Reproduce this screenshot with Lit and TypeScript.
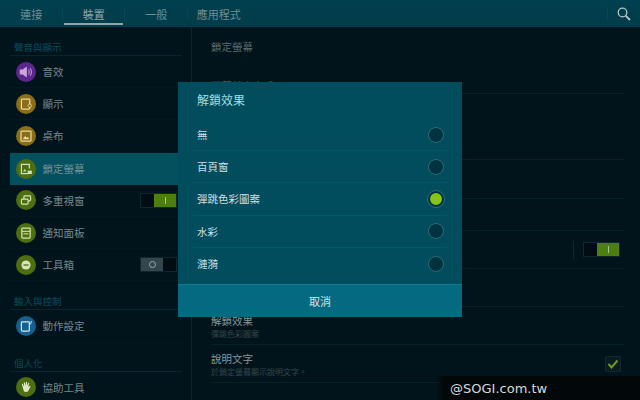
import { LitElement, html, css, svg } from 'lit';
import { customElement } from 'lit/decorators.js';

const icons: Record<string, unknown> = {
  sound: svg`<path d="M4.500 9h3.500l5-3.500v13l-5-3.500H4.500z" fill="#c9a8dc"/><path d="M15 9c1 1.500 1 4.500 0 6M17 7.500c2 2.500 2 6.500 0 9" fill="none" stroke="#c9a8dc" stroke-width="1.200"/>`,
  display: svg`<rect x="6.500" y="6" width="10" height="12" rx="1" fill="none" stroke="#e5d9a8" stroke-width="1.500"/><circle cx="16.500" cy="14" r="2" fill="#8a6d14" stroke="#e5d9a8"/>`,
  wall: svg`<rect x="6" y="6" width="12" height="12" rx="1" fill="none" stroke="#e5d9a8" stroke-width="1.500"/><path d="M8 16l3-4 2 2 1-1 2 3z" fill="#e5d9a8"/>`,
  lock: svg`<path d="M15 17.500H6.500V6.500H16v5" fill="none" stroke="#cfe0c0" stroke-width="1.500"/><path d="M8.500 15l2-3 2 3z" fill="#cfe0c0"/><rect x="14" y="14" width="5" height="4" fill="#cfe0c0"/>`,
  multi: svg`<rect x="9.500" y="7" width="8" height="6" rx="1" fill="none" stroke="#d5e4b8" stroke-width="1.400"/><rect x="6.500" y="11" width="8" height="6" rx="1" fill="#4d6f10" stroke="#d5e4b8" stroke-width="1.400"/>`,
  panel: svg`<rect x="7" y="6" width="10" height="12" rx="1" fill="none" stroke="#d5e4b8" stroke-width="1.500"/><path d="M7 10h10M9 13h6" stroke="#d5e4b8" stroke-width="1.200"/>`,
  tools: svg`<circle cx="12" cy="12" r="5.500" fill="#d5e4b8"/><path d="M9 12h6" stroke="#4d6f10" stroke-width="1.600"/>`,
  motion: svg`<rect x="6.500" y="7" width="9.500" height="11" rx="1" fill="none" stroke="#cfe4f2" stroke-width="1.500"/><path d="M18.500 6l-1 4" stroke="#cfe4f2" stroke-width="1.200"/>`,
  hand: svg`<path d="M8 12l-1-3.500 1-.5 1.500 3L9.500 6.500h1.200L11.500 10.500 12 6h1.200l.2 4.500L14.800 7l1 .4-1 4.600 2-1.500.7.800L14.500 17c-1 1.200-4 1.200-5 0z" fill="#dfe9c8"/>`,
};

const sections = [
  {
    title: '聲音與顯示',
    items: [
      { label: '音效', icon: 'sound', color: '#5d2590' },
      { label: '顯示', icon: 'display', color: '#8a6d14' },
      { label: '桌布', icon: 'wall', color: '#8a6d14' },
      { label: '鎖定螢幕', icon: 'lock', color: '#4d6f10', active: true },
      { label: '多重視窗', icon: 'multi', color: '#4d6f10', toggle: 'on' },
      { label: '通知面板', icon: 'panel', color: '#4d6f10' },
      { label: '工具箱', icon: 'tools', color: '#4d6f10', toggle: 'off' },
    ],
  },
  { title: '輸入與控制', items: [{ label: '動作設定', icon: 'motion', color: '#15608f' }] },
  { title: '個人化', items: [{ label: '協助工具', icon: 'hand', color: '#4d6f10' }] },
];

const tabs = ['連接', '裝置', '一般', '應用程式'];
const options = ['無', '百頁窗', '彈跳色彩圖案', '水彩', '漣漪'];

@customElement('app-root')
export class AppRoot extends LitElement {
  static styles = css`
    :host {
      display: block;
      width: 640px;
      height: 400px;
      position: relative;
      overflow: hidden;
      background: #01141c;
      font-family: 'Noto Sans CJK TC', 'Liberation Sans', sans-serif;
    }
    .tabs {
      display: flex;
      height: 27px;
      background: linear-gradient(#01404f, #013c4a);
      color: #6f8c93;
      font-size: 11px;
    }
    .tab {
      width: 62.500px;
      display: flex;
      align-items: center;
      justify-content: center;
      position: relative;
    }
    .tab:not(:nth-child(4))::before {
      content: '';
      position: absolute;
      right: 0;
      top: 8px;
      height: 12px;
      width: 1px;
      background: #02495a;
    }
    .tab.on {
      color: #8ea5aa;
    }
    .tab.on::after {
      content: '';
      position: absolute;
      left: 1px;
      right: 2px;
      bottom: 2px;
      height: 2px;
      background: #8fa5a8;
    }
    .tabs .spacer {
      flex: 1;
    }
    .search {
      width: 32px;
      display: flex;
      align-items: center;
      justify-content: center;
      border-left: 1px solid #024a5a;
      margin: 7px 0;
    }
    .main {
      display: flex;
      height: 373px;
    }
    .side {
      width: 192px;
      flex: none;
      border-right: 1px solid #0b2630;
      padding: 12px 9px 0 10px;
      box-sizing: border-box;
    }
    .sec {
      height: 17px;
      padding-left: 4px;
      color: #0a4b59;
      font-size: 9.500px;
      line-height: 16px;
      border-bottom: 1px solid #06252e;
      box-sizing: border-box;
    }
    .group {
      margin-bottom: 12px;
    }
    .row {
      height: 32.200px;
      display: flex;
      align-items: center;
      padding: 0 5px 0 6px;
      gap: 6.500px;
      color: #78878b;
      font-size: 10.500px;
      border-bottom: 1px solid #04191f;
      box-sizing: border-box;
    }
    .row.active {
      background: #04505f;
      margin-right: -9px;
      color: #74939a;
      border-bottom: none;
    }
    .ic {
      width: 20px;
      height: 20px;
      border-radius: 50%;
      display: block;
      flex: none;
    }
    .ic svg {
      display: block;
      width: 20px;
      height: 20px;
    }
    .label {
      flex: 1;
    }
    .sw {
      display: flex;
      width: 37px;
      height: 15px;
      border: 1px solid #0e2730;
      box-sizing: border-box;
      background: #020d13;
    }
    .sw i {
      display: flex;
      width: 22px;
      align-items: center;
      justify-content: center;
      background: #4d7f10;
      margin-left: auto;
    }
    .sw i::before {
      content: '';
      width: 1px;
      height: 7px;
      background: #a9c58a;
    }
    .sw.off i {
      background: #33464d;
      margin-left: 0;
    }
    .sw.off i::before {
      width: 5px;
      height: 5px;
      border-radius: 50%;
      background: none;
      border: 1px solid #98a9ad;
    }
    .content {
      flex: 1;
      padding: 0 15px 0 19px;
    }
    .line {
      height: 38px;
      border-bottom: 1px solid #06222a;
      box-sizing: border-box;
      display: flex;
      align-items: center;
      justify-content: flex-end;
      gap: 9px;
    }
    .line.top {
      height: 67px;
      display: block;
      padding-top: 12px;
      color: #5a6b70;
      font-size: 10.500px;
      line-height: 16px;
    }
    .line.top .under {
      margin-top: 24px;
      line-height: 14px;
    }
    .line.h66 {
      height: 66px;
    }
    .line.h39 {
      height: 39px;
    }
    .line.h32 {
      height: 32px;
    }
    .vr {
      width: 1px;
      height: 18px;
      background: #0f2a33;
    }
    .pane-sw {
      margin-right: 5px;
    }
    .text {
      flex: 1;
      display: flex;
      flex-direction: column;
      padding-top: 3px;
    }
    .t1 {
      color: #87969a;
      font-size: 10.500px;
      line-height: 13px;
    }
    .t2 {
      color: #35474d;
      font-size: 8px;
      line-height: 13px;
    }
    .check {
      width: 16px;
      height: 16px;
      margin-right: 4px;
      border: 1px solid #16262c;
      border-radius: 1px;
      background: #081c22;
      box-sizing: border-box;
    }
    .check svg {
      display: block;
      width: 14px;
      height: 14px;
    }
    .dialog {
      position: absolute;
      left: 178px;
      top: 82px;
      width: 284px;
      height: 235px;
      background: #014d5d;
      display: flex;
      flex-direction: column;
    }
    .dlg-title {
      height: 37px;
      padding: 9px 0 0 19px;
      box-sizing: border-box;
      color: #a1dde0;
      font-size: 12px;
      line-height: 17px;
    }
    .opts {
      flex: 1;
      padding: 0 15px;
    }
    .opt {
      height: 32.200px;
      display: flex;
      align-items: center;
      justify-content: space-between;
      padding: 0 3px 0 4px;
      color: #cfdfe2;
      font-size: 10.500px;
      border-bottom: 1px solid #035769;
      box-sizing: border-box;
    }
    .opt:last-child {
      border-bottom: none;
    }
    .radio {
      width: 16px;
      height: 16px;
      border-radius: 50%;
      background: #03323f;
      border: 1px solid #2b6a76;
      box-sizing: border-box;
    }
    .radio.on {
      background: #88c417;
      border: 2px solid #02313c;
      outline: 1px solid #2b6a76;
    }
    .cancel {
      height: 33px;
      flex: none;
      border-top: 1px solid #0f7c92;
      box-sizing: border-box;
      background: #036a82;
      color: #d5e6e9;
      font-size: 11px;
      display: flex;
      align-items: center;
      justify-content: center;
    }
    .mark {
      position: absolute;
      left: 436px;
      right: 0;
      bottom: 0;
      height: 24px;
      padding-left: 14px;
      background: linear-gradient(to right, transparent, #02070a 8px);
      color: #d9d9d9;
      font-family: 'DejaVu Sans', sans-serif;
      font-size: 13px;
      line-height: 26px;
    }
  `;

  renderIcon(name: string, color: string) {
    return html`<span class="ic" style="background:${color}"><svg viewBox="0 0 24 24">${icons[name]}</svg></span>`;
  }

  render() {
    return html`
      <div class="tabs">
        ${tabs.map((t, i) => html`<div class="tab ${i === 1 ? 'on' : ''}">${t}</div>`)}
        <div class="spacer"></div>
        <div class="search">
          <svg width="14" height="14" viewBox="0 0 14 14">
            <circle cx="5.500" cy="5.500" r="4.300" fill="none" stroke="#b7c6c9" stroke-width="1.300" />
            <path d="M8.800 8.800l4.200 4.200" stroke="#b7c6c9" stroke-width="1.800" />
          </svg>
        </div>
      </div>
      <div class="main">
        <div class="side">
          ${sections.map(
            (s) => html`
              <div class="group">
                <div class="sec">${s.title}</div>
                ${s.items.map(
                  (it: any) => html`
                    <div class="row ${it.active ? 'active' : ''}">
                      ${this.renderIcon(it.icon, it.color)}
                      <span class="label">${it.label}</span>
                      ${it.toggle
                        ? html`<span class="sw ${it.toggle === 'off' ? 'off' : ''}"><i></i></span>`
                        : ''}
                    </div>
                  `
                )}
              </div>
            `
          )}
        </div>
        <div class="content">
          <div class="line top">
            <div>鎖定螢幕</div>
            <div class="under">螢幕鎖定方式</div>
          </div>
          <div class="line h66"></div>
          <div class="line h39"></div>
          <div class="line h32"></div>
          <div class="line">
            <span class="vr"></span>
            <span class="sw pane-sw"><i></i></span>
          </div>
          <div class="line"></div>
          <div class="line">
            <div class="text"><span class="t1">解鎖效果</span><span class="t2">彈跳色彩圖案</span></div>
          </div>
          <div class="line">
            <div class="text"><span class="t1">說明文字</span><span class="t2">於鎖定螢幕顯示說明文字。</span></div>
            <span class="check">
              <svg viewBox="0 0 14 14"><path d="M2.500 7l3 3.500 6-7" fill="none" stroke="#6f9a24" stroke-width="2" /></svg>
            </span>
          </div>
        </div>
      </div>
      <div class="dialog">
        <div class="dlg-title">解鎖效果</div>
        <div class="opts">
          ${options.map(
            (o, i) => html`<div class="opt"><span>${o}</span><span class="radio ${i === 2 ? 'on' : ''}"></span></div>`
          )}
        </div>
        <div class="cancel">取消</div>
      </div>
      <div class="mark">@SOGI.com.tw</div>
    `;
  }
}
